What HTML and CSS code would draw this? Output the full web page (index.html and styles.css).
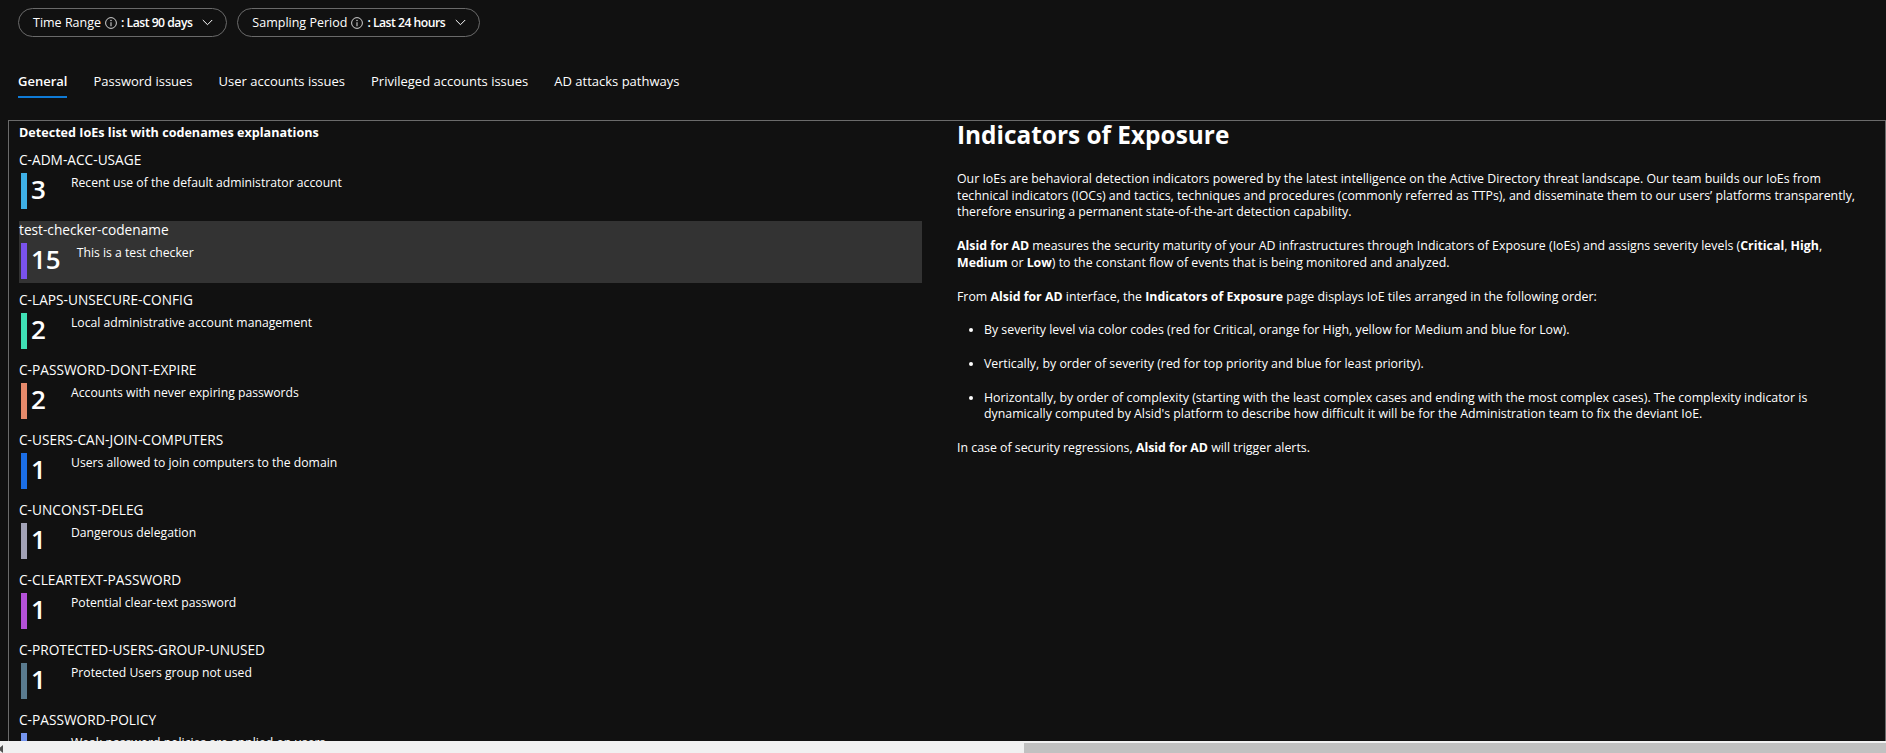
FILE: index.html
```html
<!DOCTYPE html>
<html lang="en">
<head>
<meta charset="utf-8">
<title>Indicators of Exposure</title>
<link rel="stylesheet" href="styles.css">
</head>
<body>
<div class="page">
  <div class="filters">
    <div class="pill">
      <span class="pill-label">Time Range</span>
      <svg class="info" width="12" height="12" viewBox="0 0 12 12"><circle cx="6" cy="6" r="5.4" fill="none" stroke="#d0d0d0" stroke-width="1"/><circle cx="6" cy="3.6" r="0.75" fill="#d0d0d0"/><path d="M6 5.3V9.2" stroke="#d0d0d0" stroke-width="1.1"/></svg>
      <span class="pill-value">: Last 90 days</span>
      <svg class="chev" width="11" height="7" viewBox="0 0 11 7"><path d="M0.8 1 L5.5 5.7 L10.2 1" fill="none" stroke="#fff" stroke-width="1"/></svg>
    </div>
    <div class="pill">
      <span class="pill-label">Sampling Period</span>
      <svg class="info" width="12" height="12" viewBox="0 0 12 12"><circle cx="6" cy="6" r="5.4" fill="none" stroke="#d0d0d0" stroke-width="1"/><circle cx="6" cy="3.6" r="0.75" fill="#d0d0d0"/><path d="M6 5.3V9.2" stroke="#d0d0d0" stroke-width="1.1"/></svg>
      <span class="pill-value">: Last 24 hours</span>
      <svg class="chev" width="11" height="7" viewBox="0 0 11 7"><path d="M0.8 1 L5.5 5.7 L10.2 1" fill="none" stroke="#fff" stroke-width="1"/></svg>
    </div>
  </div>

  <nav class="tabs">
    <a class="tab active">General</a>
    <a class="tab">Password issues</a>
    <a class="tab">User accounts issues</a>
    <a class="tab">Privileged accounts issues</a>
    <a class="tab">AD attacks pathways</a>
  </nav>

  <section class="panel">
    <div class="col list-col">
      <h2 class="list-title">Detected IoEs list with codenames explanations</h2>

      <div class="ioe">
        <div class="codename">C-ADM-ACC-USAGE</div>
        <div class="ioe-row"><span class="sev sev-lightblue"></span><span class="count">3</span><span class="desc">Recent use of the default administrator account</span></div>
      </div>

      <div class="ioe selected">
        <div class="codename">test-checker-codename</div>
        <div class="ioe-row"><span class="sev sev-violet"></span><span class="count count-wide">15</span><span class="desc">This is a test checker</span></div>
      </div>

      <div class="ioe">
        <div class="codename">C-LAPS-UNSECURE-CONFIG</div>
        <div class="ioe-row"><span class="sev sev-mint"></span><span class="count">2</span><span class="desc">Local administrative account management</span></div>
      </div>

      <div class="ioe">
        <div class="codename">C-PASSWORD-DONT-EXPIRE</div>
        <div class="ioe-row"><span class="sev sev-salmon"></span><span class="count">2</span><span class="desc">Accounts with never expiring passwords</span></div>
      </div>

      <div class="ioe">
        <div class="codename">C-USERS-CAN-JOIN-COMPUTERS</div>
        <div class="ioe-row"><span class="sev sev-blue"></span><span class="count">1</span><span class="desc">Users allowed to join computers to the domain</span></div>
      </div>

      <div class="ioe">
        <div class="codename">C-UNCONST-DELEG</div>
        <div class="ioe-row"><span class="sev sev-grey"></span><span class="count">1</span><span class="desc">Dangerous delegation</span></div>
      </div>

      <div class="ioe">
        <div class="codename">C-CLEARTEXT-PASSWORD</div>
        <div class="ioe-row"><span class="sev sev-purple"></span><span class="count">1</span><span class="desc">Potential clear-text password</span></div>
      </div>

      <div class="ioe">
        <div class="codename">C-PROTECTED-USERS-GROUP-UNUSED</div>
        <div class="ioe-row"><span class="sev sev-slate"></span><span class="count">1</span><span class="desc">Protected Users group not used</span></div>
      </div>

      <div class="ioe">
        <div class="codename">C-PASSWORD-POLICY</div>
        <div class="ioe-row"><span class="sev sev-periwinkle"></span><span class="count">7</span><span class="desc">Weak password policies are applied on users</span></div>
      </div>
    </div>

    <div class="col info-col">
      <h1 class="info-title">Indicators of Exposure</h1>
      <p>Our IoEs are behavioral detection indicators powered by the latest intelligence on the Active Directory threat landscape. Our team builds our IoEs from technical indicators (IOCs) and tactics, techniques and procedures (commonly referred as TTPs), and disseminate them to our users’ platforms transparently, therefore ensuring a permanent state-of-the-art detection capability.</p>
      <p><strong>Alsid for AD</strong> measures the security maturity of your AD infrastructures through Indicators of Exposure (IoEs) and assigns severity levels (<strong>Critical</strong>, <strong>High</strong>, <strong>Medium</strong> or <strong>Low</strong>) to the constant flow of events that is being monitored and analyzed.</p>
      <p>From <strong>Alsid for AD</strong> interface, the <strong>Indicators of Exposure</strong> page displays IoE tiles arranged in the following order:</p>
      <ul>
        <li>By severity level via color codes (red for Critical, orange for High, yellow for Medium and blue for Low).</li>
        <li>Vertically, by order of severity (red for top priority and blue for least priority).</li>
        <li>Horizontally, by order of complexity (starting with the least complex cases and ending with the most complex cases). The complexity indicator is dynamically computed by Alsid's platform to describe how difficult it will be for the Administration team to fix the deviant IoE.</li>
      </ul>
      <p>In case of security regressions, <strong>Alsid for AD</strong> will trigger alerts.</p>
    </div>
  </section>

  <div class="hscroll"><span class="hscroll-arrow"></span><span class="hscroll-thumb"></span></div>
</div>
</body>
</html>
```

FILE: styles.css
```css
html, body {
  margin: 0;
  padding: 0;
  background: #111111;
  color: #ffffff;
  font-family: "Segoe UI", "Open Sans", sans-serif;
}

.page {
  height: 100vh;
  display: flex;
  flex-direction: column;
  overflow: hidden;
}

/* filter pills */
.filters {
  display: flex;
  gap: 10px;
  padding: 8px 0 0 18px;
  flex: none;
}

.pill {
  box-sizing: border-box;
  height: 29px;
  display: flex;
  align-items: center;
  gap: 4px;
  padding: 0 13px 0 14px;
  border: 1px solid #6a6a6a;
  border-radius: 15px;
  font-size: 12.5px;
  color: #ffffff;
}

.pill-value {
  font-weight: 600;
  font-size: 12.2px;
  letter-spacing: -0.5px;
}

.info {
  margin-top: 1px;
}

.chev {
  margin-left: 6px;
}

/* tabs */
.tabs {
  display: flex;
  gap: 26px;
  padding-left: 18px;
  margin-top: 34px;
  flex: none;
}

.tab {
  font-size: 13px;
  line-height: 20px;
  padding-bottom: 5px;
  border-bottom: 2px solid transparent;
  color: #ffffff;
}

.tab.active {
  font-weight: 600;
  border-bottom-color: #0f7bd6;
}

/* panel */
.panel {
  flex: 1;
  min-height: 0;
  margin: 22px 0 0 8px;
  border: 1px solid #6b6b6b;
  border-bottom: 0;
  display: grid;
  grid-template-columns: 1fr 1fr;
  grid-template-rows: minmax(0, 1fr);
}

.col {
  padding: 0 25px 0 10px;
  min-width: 0;
}

.list-col {
  padding-top: 3px;
  overflow: hidden;
}

.list-title {
  margin: 0 0 9px;
  font-size: 12.6px;
  line-height: 18px;
  font-weight: 700;
}

.ioe {
  padding-bottom: 4px;
  margin-bottom: 8px;
}

.ioe.selected {
  background: #333333;
}

.codename {
  font-size: 13.7px;
  line-height: 18px;
}

.ioe-row {
  display: flex;
  align-items: flex-start;
  margin-top: 4px;
  height: 36px;
}

.sev {
  width: 6px;
  height: 36px;
  margin-left: 2px;
  flex: none;
}

.sev-lightblue { background: #3eb0e6; }
.sev-violet { background: #7a52ec; }
.sev-mint { background: #3fe0b5; }
.sev-salmon { background: #e68a6b; }
.sev-blue { background: #1b6ee6; }
.sev-grey { background: #a2a2b6; }
.sev-purple { background: #b451d8; }
.sev-slate { background: #5a7b8f; }
.sev-periwinkle { background: #7595ef; }

.count {
  font-size: 26px;
  font-weight: 600;
  line-height: 32px;
  margin-left: 4px;
  min-width: 28px;
  margin-right: 12px;
}

.count-wide {
  margin-right: 16px;
}

.desc {
  font-size: 12.2px;
  line-height: 20px;
}

/* info column */
.info-col {
  font-size: 12.35px;
  line-height: 16.7px;
  overflow: visible;
}

.info-title {
  margin: 0 0 22px;
  font-size: 24.4px;
  line-height: 28px;
  font-weight: 700;
}

.info-col p {
  margin: 0 0 17px;
}

.info-col ul {
  margin: 0;
  padding-left: 27px;
}

.info-col li {
  margin-bottom: 17px;
}

.info-col strong {
  font-weight: 700;
}

/* horizontal scrollbar */
.hscroll {
  flex: none;
  height: 12px;
  background: #f1f1f1;
  display: flex;
  position: relative;
  z-index: 1;
}

.hscroll-arrow {
  width: 0;
  height: 0;
  margin: 4px 0 0 -2px;
  border-top: 4px solid transparent;
  border-bottom: 4px solid transparent;
  border-right: 5px solid #505050;
}

.hscroll-thumb {
  flex: 1;
  margin: 2px 0 0 1021px;
  background: #c1c1c1;
}
```
